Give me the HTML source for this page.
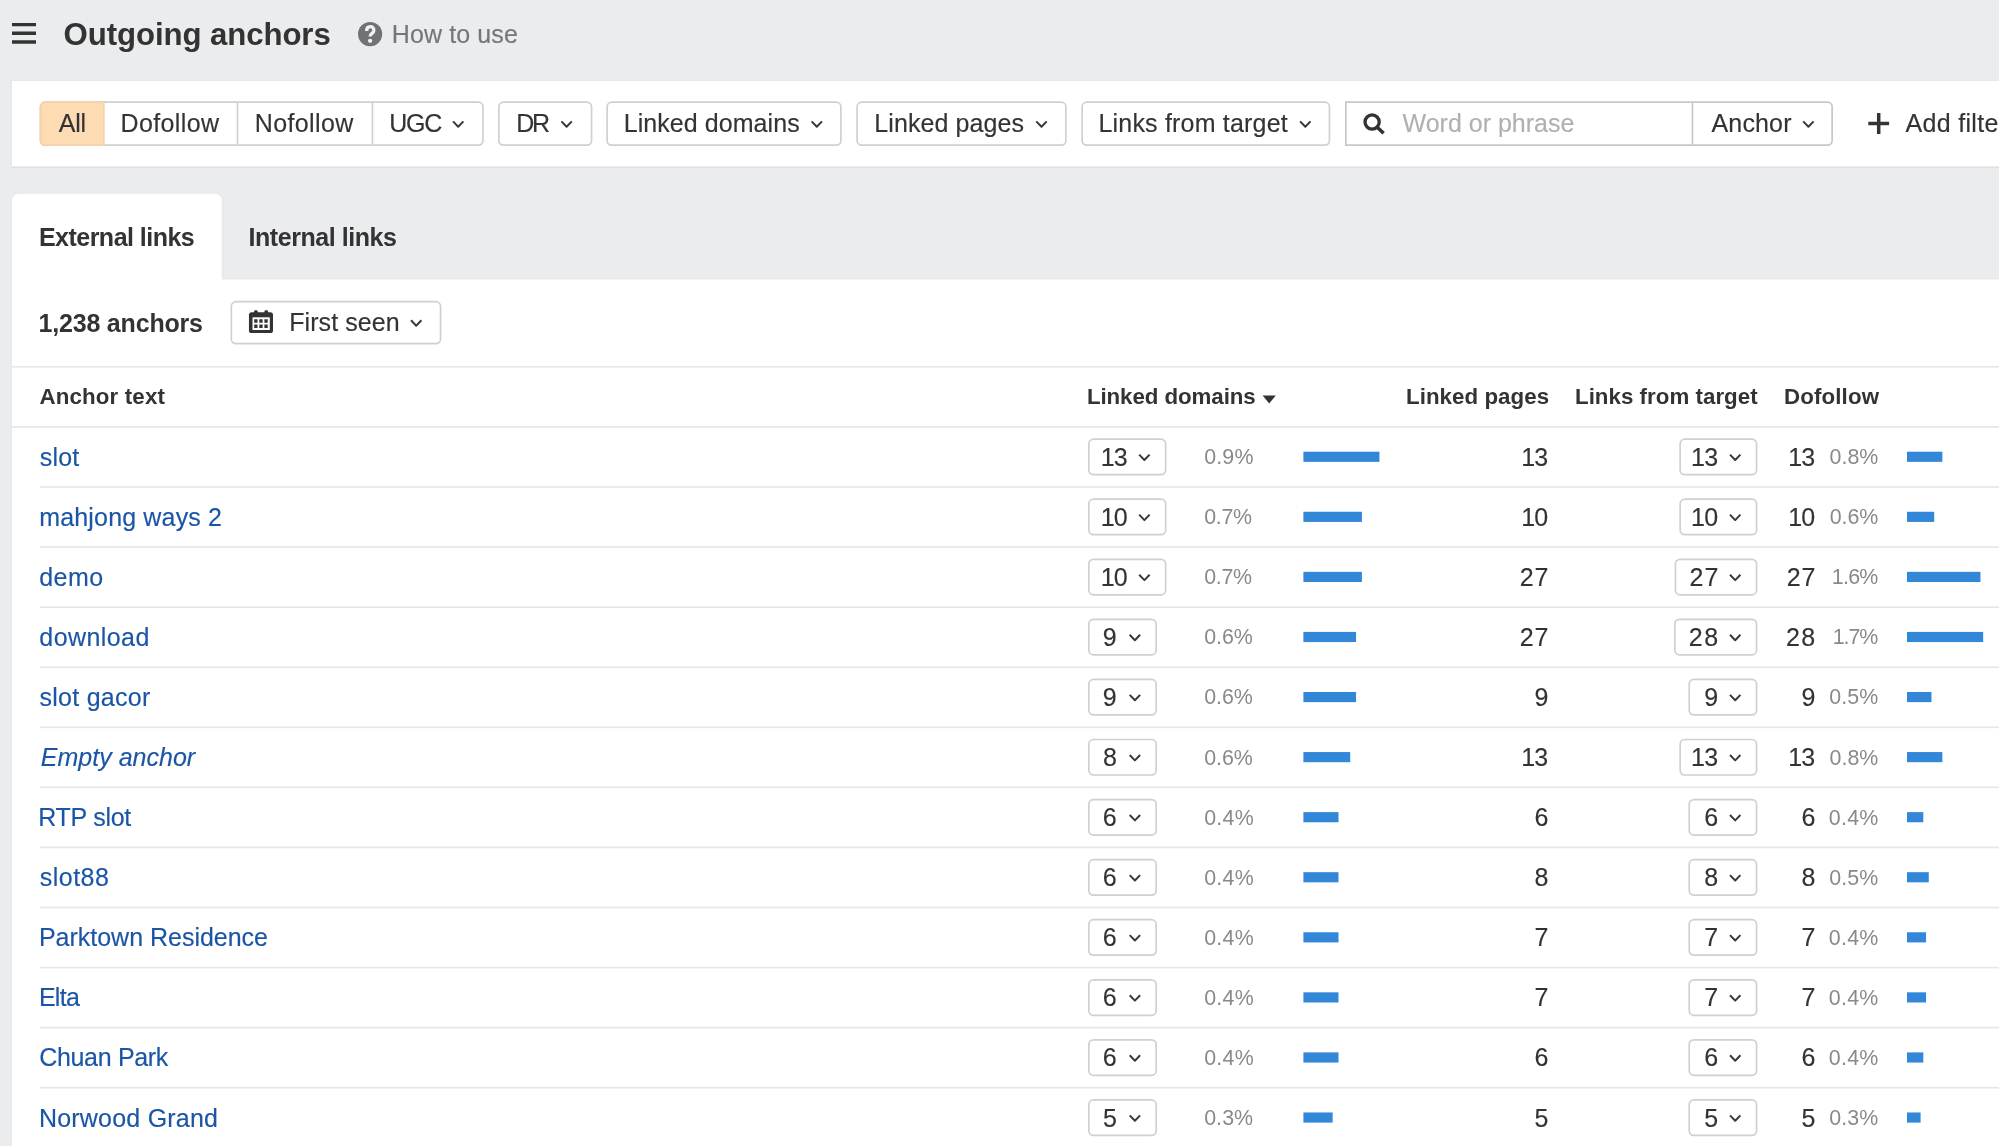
<!DOCTYPE html>
<html lang="en">
<head>
<meta charset="utf-8">
<title>Outgoing anchors</title>
<style>
*{box-sizing:border-box;margin:0;padding:0}
html,body{width:1999px;height:1146px;overflow:hidden}
body{background:#ebecee;font-family:"Liberation Sans",sans-serif;color:#333;font-size:25.0px;position:relative}
#shapes{position:absolute;left:0;top:0;display:block;filter:blur(0.4px)}
#txt{position:absolute;left:0;top:0;width:2010px;height:1160px;overflow:hidden;will-change:transform;filter:blur(0.4px)}
.t{position:absolute;white-space:pre;line-height:1;color:#333;font-size:25.0px;-webkit-text-stroke:0.15px}
.b,.p{-webkit-text-stroke:0}
.b{font-weight:700}
.g{color:#757679}
.ph{color:#b0b0b0}
.a{color:#1b55a6}
.p{color:#898989}
.i{font-style:italic}
</style>
</head>
<body>
<svg id="shapes" width="2010" height="1160" viewBox="0 0 2010 1160">
<rect x="12" y="81" width="2000" height="85.5" fill="#fff" stroke="#e8e9ec" stroke-width="3.4"/>
<rect x="12.00" y="166.00" width="1998.00" height="2.20" fill="#dfe0e3"/>
<rect x="12.00" y="81.00" width="1998.00" height="85.40" fill="#fff"/>
<path d="M12 1200V200.25a6.5 6.5 0 0 1 6.5-6.5h196.7a6.5 6.5 0 0 1 6.5 6.5V279.6H2010V1200z" fill="#fff" stroke="#e8e9ec" stroke-width="3.4"/>
<path d="M12 1200V200.25a6.5 6.5 0 0 1 6.5-6.5h196.7a6.5 6.5 0 0 1 6.5 6.5V279.6H2010V1200z" fill="#fff"/>
<path d="M12 24.6h24M12 33.3h24M12 42h24" stroke="#333" stroke-width="3.4" fill="none"/>
<circle cx="370.1" cy="34.1" r="12.1" fill="#717275"/>
<path d="M366.6 30.9C366.6 25.3 373.9 25.3 373.9 30.2C373.9 33.5 370.1 33.2 370.1 36.6" fill="none" stroke="#f3f3f4" stroke-width="3.3"/>
<circle cx="370.1" cy="40.8" r="2.15" fill="#f3f3f4"/>
<rect x="40.45" y="102.15" width="442.50" height="43.00" rx="4.65" fill="#fff" stroke="#d0d0d0" stroke-width="1.7"/>
<path d="M103.8 102.15H45.1a4.65 4.65 0 0 0-4.65 4.65V140.50a4.65 4.65 0 0 0 4.65 4.65H103.8z" fill="#fddcb4" stroke="#f3d2a7" stroke-width="1.7"/>
<rect x="236.70" y="103.00" width="1.70" height="41.30" fill="#d0d0d0"/>
<rect x="371.60" y="103.00" width="1.70" height="41.30" fill="#d0d0d0"/>
<path d="M453.00 121.40L458.20 126.80L463.40 121.40" fill="none" stroke="#3a3a3a" stroke-width="2.0" stroke-linejoin="round"/>
<rect x="498.85" y="102.15" width="92.70" height="43.00" rx="4.65" fill="#fff" stroke="#d0d0d0" stroke-width="1.7"/>
<path d="M561.40 121.40L566.60 126.80L571.80 121.40" fill="none" stroke="#3a3a3a" stroke-width="2.0" stroke-linejoin="round"/>
<rect x="607.10" y="102.15" width="233.80" height="43.00" rx="4.65" fill="#fff" stroke="#d0d0d0" stroke-width="1.7"/>
<path d="M811.60 121.40L816.80 126.80L822.00 121.40" fill="none" stroke="#3a3a3a" stroke-width="2.0" stroke-linejoin="round"/>
<rect x="857.10" y="102.15" width="208.80" height="43.00" rx="4.65" fill="#fff" stroke="#d0d0d0" stroke-width="1.7"/>
<path d="M1036.30 121.40L1041.50 126.80L1046.70 121.40" fill="none" stroke="#3a3a3a" stroke-width="2.0" stroke-linejoin="round"/>
<rect x="1082.10" y="102.15" width="247.35" height="43.00" rx="4.65" fill="#fff" stroke="#d0d0d0" stroke-width="1.7"/>
<path d="M1300.10 121.40L1305.30 126.80L1310.50 121.40" fill="none" stroke="#3a3a3a" stroke-width="2.0" stroke-linejoin="round"/>
<path d="M1345.85 102.15H1827.50a4.65 4.65 0 0 1 4.65 4.65V140.50a4.65 4.65 0 0 1-4.65 4.65H1345.85z" fill="#fff" stroke="#c8c8c8" stroke-width="1.7"/>
<rect x="1691.60" y="103.00" width="1.70" height="41.30" fill="#c8c8c8"/>
<circle cx="1372.1" cy="122" r="7.1" fill="none" stroke="#333" stroke-width="3.3"/>
<path d="M1377.2 127.2L1383.6 133.3" stroke="#333" stroke-width="3.6"/>
<path d="M1803.20 121.40L1808.40 126.80L1813.60 121.40" fill="none" stroke="#3a3a3a" stroke-width="2.0" stroke-linejoin="round"/>
<path d="M1878.7 113v20.9M1868.3 123.5h20.8" stroke="#333" stroke-width="3.5" fill="none"/>
<rect x="231.35" y="301.65" width="209.20" height="42.00" rx="4.65" fill="#fff" stroke="#d0d0d0" stroke-width="1.7"/>
<rect x="248.95" y="312.2" width="24.05" height="20.8" rx="2.6" fill="#333"/><rect x="254.1" y="310.3" width="3.6" height="4.5" rx="1.3" fill="#333"/><rect x="264.45" y="310.3" width="3.6" height="4.5" rx="1.3" fill="#333"/><rect x="252.5" y="317.3" width="17.3" height="12.7" fill="#fff"/><path d="M254.2 319.2h3.3v3.5h-3.3zM259.3 319.2h3.3v3.5h-3.3zM264.4 319.2h3.3v3.5h-3.3zM254.2 324.5h3.3v3.5h-3.3zM259.3 324.5h3.3v3.5h-3.3zM264.4 324.5h3.3v3.5h-3.3z" fill="#333"/>
<path d="M411.00 320.30L416.20 325.70L421.40 320.30" fill="none" stroke="#3a3a3a" stroke-width="2.0" stroke-linejoin="round"/>
<rect x="12.00" y="365.90" width="1987.00" height="1.70" fill="#e7e7e7"/>
<path d="M1262.6 395.4h13.2l-6.6 8z" fill="#333"/>
<rect x="12.00" y="426.10" width="1987.00" height="1.70" fill="#e7e7e7"/>
<rect x="1088.85" y="439.15" width="76.80" height="35.50" rx="4.65" fill="#fff" stroke="#d0d0d0" stroke-width="1.7"/>
<path d="M1139.20 454.60L1144.40 460.00L1149.60 454.60" fill="none" stroke="#3a3a3a" stroke-width="2.0" stroke-linejoin="round"/>
<rect x="1303.40" y="451.70" width="76.05" height="10.15" fill="#3387d8"/>
<rect x="1680.15" y="439.15" width="76.40" height="35.50" rx="4.65" fill="#fff" stroke="#d0d0d0" stroke-width="1.7"/>
<path d="M1730.00 454.60L1735.20 460.00L1740.40 454.60" fill="none" stroke="#3a3a3a" stroke-width="2.0" stroke-linejoin="round"/>
<rect x="1907.00" y="451.70" width="35.36" height="10.15" fill="#3387d8"/>
<rect x="40.00" y="486.17" width="1959.00" height="1.70" fill="#e7e7e7"/>
<rect x="1088.85" y="499.22" width="76.80" height="35.50" rx="4.65" fill="#fff" stroke="#d0d0d0" stroke-width="1.7"/>
<path d="M1139.20 514.67L1144.40 520.07L1149.60 514.67" fill="none" stroke="#3a3a3a" stroke-width="2.0" stroke-linejoin="round"/>
<rect x="1303.40" y="511.77" width="58.50" height="10.15" fill="#3387d8"/>
<rect x="1680.15" y="499.22" width="76.40" height="35.50" rx="4.65" fill="#fff" stroke="#d0d0d0" stroke-width="1.7"/>
<path d="M1730.00 514.67L1735.20 520.07L1740.40 514.67" fill="none" stroke="#3a3a3a" stroke-width="2.0" stroke-linejoin="round"/>
<rect x="1907.00" y="511.77" width="27.20" height="10.15" fill="#3387d8"/>
<rect x="40.00" y="546.24" width="1959.00" height="1.70" fill="#e7e7e7"/>
<rect x="1088.85" y="559.29" width="76.80" height="35.50" rx="4.65" fill="#fff" stroke="#d0d0d0" stroke-width="1.7"/>
<path d="M1139.20 574.74L1144.40 580.14L1149.60 574.74" fill="none" stroke="#3a3a3a" stroke-width="2.0" stroke-linejoin="round"/>
<rect x="1303.40" y="571.84" width="58.50" height="10.15" fill="#3387d8"/>
<rect x="1675.45" y="559.29" width="81.10" height="35.50" rx="4.65" fill="#fff" stroke="#d0d0d0" stroke-width="1.7"/>
<path d="M1730.00 574.74L1735.20 580.14L1740.40 574.74" fill="none" stroke="#3a3a3a" stroke-width="2.0" stroke-linejoin="round"/>
<rect x="1907.00" y="571.84" width="73.44" height="10.15" fill="#3387d8"/>
<rect x="40.00" y="606.31" width="1959.00" height="1.70" fill="#e7e7e7"/>
<rect x="1088.85" y="619.36" width="67.30" height="35.50" rx="4.65" fill="#fff" stroke="#d0d0d0" stroke-width="1.7"/>
<path d="M1129.70 634.81L1134.90 640.21L1140.10 634.81" fill="none" stroke="#3a3a3a" stroke-width="2.0" stroke-linejoin="round"/>
<rect x="1303.40" y="631.91" width="52.65" height="10.15" fill="#3387d8"/>
<rect x="1674.85" y="619.36" width="81.70" height="35.50" rx="4.65" fill="#fff" stroke="#d0d0d0" stroke-width="1.7"/>
<path d="M1730.00 634.81L1735.20 640.21L1740.40 634.81" fill="none" stroke="#3a3a3a" stroke-width="2.0" stroke-linejoin="round"/>
<rect x="1907.00" y="631.91" width="76.16" height="10.15" fill="#3387d8"/>
<rect x="40.00" y="666.38" width="1959.00" height="1.70" fill="#e7e7e7"/>
<rect x="1088.85" y="679.43" width="67.30" height="35.50" rx="4.65" fill="#fff" stroke="#d0d0d0" stroke-width="1.7"/>
<path d="M1129.70 694.88L1134.90 700.28L1140.10 694.88" fill="none" stroke="#3a3a3a" stroke-width="2.0" stroke-linejoin="round"/>
<rect x="1303.40" y="691.98" width="52.65" height="10.15" fill="#3387d8"/>
<rect x="1689.25" y="679.43" width="67.30" height="35.50" rx="4.65" fill="#fff" stroke="#d0d0d0" stroke-width="1.7"/>
<path d="M1730.00 694.88L1735.20 700.28L1740.40 694.88" fill="none" stroke="#3a3a3a" stroke-width="2.0" stroke-linejoin="round"/>
<rect x="1907.00" y="691.98" width="24.48" height="10.15" fill="#3387d8"/>
<rect x="40.00" y="726.45" width="1959.00" height="1.70" fill="#e7e7e7"/>
<rect x="1088.85" y="739.50" width="67.30" height="35.50" rx="4.65" fill="#fff" stroke="#d0d0d0" stroke-width="1.7"/>
<path d="M1129.70 754.95L1134.90 760.35L1140.10 754.95" fill="none" stroke="#3a3a3a" stroke-width="2.0" stroke-linejoin="round"/>
<rect x="1303.40" y="752.05" width="46.80" height="10.15" fill="#3387d8"/>
<rect x="1680.15" y="739.50" width="76.40" height="35.50" rx="4.65" fill="#fff" stroke="#d0d0d0" stroke-width="1.7"/>
<path d="M1730.00 754.95L1735.20 760.35L1740.40 754.95" fill="none" stroke="#3a3a3a" stroke-width="2.0" stroke-linejoin="round"/>
<rect x="1907.00" y="752.05" width="35.36" height="10.15" fill="#3387d8"/>
<rect x="40.00" y="786.52" width="1959.00" height="1.70" fill="#e7e7e7"/>
<rect x="1088.85" y="799.57" width="67.30" height="35.50" rx="4.65" fill="#fff" stroke="#d0d0d0" stroke-width="1.7"/>
<path d="M1129.70 815.02L1134.90 820.42L1140.10 815.02" fill="none" stroke="#3a3a3a" stroke-width="2.0" stroke-linejoin="round"/>
<rect x="1303.40" y="812.12" width="35.10" height="10.15" fill="#3387d8"/>
<rect x="1689.25" y="799.57" width="67.30" height="35.50" rx="4.65" fill="#fff" stroke="#d0d0d0" stroke-width="1.7"/>
<path d="M1730.00 815.02L1735.20 820.42L1740.40 815.02" fill="none" stroke="#3a3a3a" stroke-width="2.0" stroke-linejoin="round"/>
<rect x="1907.00" y="812.12" width="16.32" height="10.15" fill="#3387d8"/>
<rect x="40.00" y="846.59" width="1959.00" height="1.70" fill="#e7e7e7"/>
<rect x="1088.85" y="859.64" width="67.30" height="35.50" rx="4.65" fill="#fff" stroke="#d0d0d0" stroke-width="1.7"/>
<path d="M1129.70 875.09L1134.90 880.49L1140.10 875.09" fill="none" stroke="#3a3a3a" stroke-width="2.0" stroke-linejoin="round"/>
<rect x="1303.40" y="872.19" width="35.10" height="10.15" fill="#3387d8"/>
<rect x="1689.25" y="859.64" width="67.30" height="35.50" rx="4.65" fill="#fff" stroke="#d0d0d0" stroke-width="1.7"/>
<path d="M1730.00 875.09L1735.20 880.49L1740.40 875.09" fill="none" stroke="#3a3a3a" stroke-width="2.0" stroke-linejoin="round"/>
<rect x="1907.00" y="872.19" width="21.76" height="10.15" fill="#3387d8"/>
<rect x="40.00" y="906.66" width="1959.00" height="1.70" fill="#e7e7e7"/>
<rect x="1088.85" y="919.71" width="67.30" height="35.50" rx="4.65" fill="#fff" stroke="#d0d0d0" stroke-width="1.7"/>
<path d="M1129.70 935.16L1134.90 940.56L1140.10 935.16" fill="none" stroke="#3a3a3a" stroke-width="2.0" stroke-linejoin="round"/>
<rect x="1303.40" y="932.26" width="35.10" height="10.15" fill="#3387d8"/>
<rect x="1689.25" y="919.71" width="67.30" height="35.50" rx="4.65" fill="#fff" stroke="#d0d0d0" stroke-width="1.7"/>
<path d="M1730.00 935.16L1735.20 940.56L1740.40 935.16" fill="none" stroke="#3a3a3a" stroke-width="2.0" stroke-linejoin="round"/>
<rect x="1907.00" y="932.26" width="19.04" height="10.15" fill="#3387d8"/>
<rect x="40.00" y="966.73" width="1959.00" height="1.70" fill="#e7e7e7"/>
<rect x="1088.85" y="979.78" width="67.30" height="35.50" rx="4.65" fill="#fff" stroke="#d0d0d0" stroke-width="1.7"/>
<path d="M1129.70 995.23L1134.90 1000.63L1140.10 995.23" fill="none" stroke="#3a3a3a" stroke-width="2.0" stroke-linejoin="round"/>
<rect x="1303.40" y="992.33" width="35.10" height="10.15" fill="#3387d8"/>
<rect x="1689.25" y="979.78" width="67.30" height="35.50" rx="4.65" fill="#fff" stroke="#d0d0d0" stroke-width="1.7"/>
<path d="M1730.00 995.23L1735.20 1000.63L1740.40 995.23" fill="none" stroke="#3a3a3a" stroke-width="2.0" stroke-linejoin="round"/>
<rect x="1907.00" y="992.33" width="19.04" height="10.15" fill="#3387d8"/>
<rect x="40.00" y="1026.80" width="1959.00" height="1.70" fill="#e7e7e7"/>
<rect x="1088.85" y="1039.85" width="67.30" height="35.50" rx="4.65" fill="#fff" stroke="#d0d0d0" stroke-width="1.7"/>
<path d="M1129.70 1055.30L1134.90 1060.70L1140.10 1055.30" fill="none" stroke="#3a3a3a" stroke-width="2.0" stroke-linejoin="round"/>
<rect x="1303.40" y="1052.40" width="35.10" height="10.15" fill="#3387d8"/>
<rect x="1689.25" y="1039.85" width="67.30" height="35.50" rx="4.65" fill="#fff" stroke="#d0d0d0" stroke-width="1.7"/>
<path d="M1730.00 1055.30L1735.20 1060.70L1740.40 1055.30" fill="none" stroke="#3a3a3a" stroke-width="2.0" stroke-linejoin="round"/>
<rect x="1907.00" y="1052.40" width="16.32" height="10.15" fill="#3387d8"/>
<rect x="40.00" y="1086.87" width="1959.00" height="1.70" fill="#e7e7e7"/>
<rect x="1088.85" y="1099.92" width="67.30" height="35.50" rx="4.65" fill="#fff" stroke="#d0d0d0" stroke-width="1.7"/>
<path d="M1129.70 1115.37L1134.90 1120.77L1140.10 1115.37" fill="none" stroke="#3a3a3a" stroke-width="2.0" stroke-linejoin="round"/>
<rect x="1303.40" y="1112.47" width="29.25" height="10.15" fill="#3387d8"/>
<rect x="1689.25" y="1099.92" width="67.30" height="35.50" rx="4.65" fill="#fff" stroke="#d0d0d0" stroke-width="1.7"/>
<path d="M1730.00 1115.37L1735.20 1120.77L1740.40 1115.37" fill="none" stroke="#3a3a3a" stroke-width="2.0" stroke-linejoin="round"/>
<rect x="1907.00" y="1112.47" width="13.60" height="10.15" fill="#3387d8"/>
</svg>
<div id="txt">
<div class="t b" style="left:63.55px;top:19px;font-size:31.2px;letter-spacing:-0.09px;">Outgoing anchors</div>
<div class="t g" style="left:391.75px;top:22px;letter-spacing:0.12px;">How to use</div>
<div class="t" style="left:58.80px;top:111px;letter-spacing:-0.27px;">All</div>
<div class="t" style="left:120.50px;top:111px;letter-spacing:0.39px;">Dofollow</div>
<div class="t" style="left:254.75px;top:111px;letter-spacing:0.39px;">Nofollow</div>
<div class="t" style="left:389.25px;top:111px;letter-spacing:-1.25px;">UGC</div>
<div class="t" style="left:516.30px;top:111px;letter-spacing:-2.35px;">DR</div>
<div class="t" style="left:623.75px;top:111px;letter-spacing:0.06px;">Linked domains</div>
<div class="t" style="left:874.25px;top:111px;letter-spacing:0.09px;">Linked pages</div>
<div class="t" style="left:1098.50px;top:111px;letter-spacing:0.19px;">Links from target</div>
<div class="t ph" style="left:1402.55px;top:111px;">Word or phrase</div>
<div class="t" style="left:1711.50px;top:111px;letter-spacing:0.15px;">Anchor</div>
<div class="t" style="left:1905.50px;top:111px;letter-spacing:0.31px;">Add filter</div>
<div class="t b" style="left:38.95px;top:225px;letter-spacing:-0.52px;">External links</div>
<div class="t b" style="left:248.55px;top:225px;letter-spacing:-0.45px;">Internal links</div>
<div class="t b" style="left:38.50px;top:311px;letter-spacing:-0.19px;">1,238 anchors</div>
<div class="t" style="left:289.25px;top:310px;letter-spacing:0.06px;">First seen</div>
<div class="t b" style="left:39.50px;top:386px;font-size:22.3px;letter-spacing:0.15px;">Anchor text</div>
<div class="t b" style="left:1086.90px;top:386px;font-size:22.3px;letter-spacing:-0.07px;">Linked domains</div>
<div class="t b" style="left:1406.00px;top:386px;font-size:22.3px;letter-spacing:0.05px;">Linked pages</div>
<div class="t b" style="left:1575.00px;top:386px;font-size:22.3px;letter-spacing:0.03px;">Links from target</div>
<div class="t b" style="left:1784.10px;top:386px;font-size:22.3px;letter-spacing:0.11px;">Dofollow</div>
<div class="t a" style="left:39.75px;top:445px;letter-spacing:0.17px;">slot</div>
<div class="t" style="left:1100.70px;top:445px;letter-spacing:-0.75px;">13</div>
<div class="t p" style="left:1204.15px;top:447px;font-size:21.4px;letter-spacing:0.18px;">0.9%</div>
<div class="t" style="left:1521.20px;top:445px;letter-spacing:-0.75px;">13</div>
<div class="t" style="left:1691.00px;top:445px;letter-spacing:-0.75px;">13</div>
<div class="t" style="left:1788.20px;top:445px;letter-spacing:-0.75px;">13</div>
<div class="t p" style="left:1829.55px;top:447px;font-size:21.4px;letter-spacing:0.02px;">0.8%</div>
<div class="t a" style="left:39.25px;top:505px;letter-spacing:0.16px;">mahjong ways 2</div>
<div class="t" style="left:1100.70px;top:505px;letter-spacing:-0.75px;">10</div>
<div class="t p" style="left:1204.15px;top:507px;font-size:21.4px;letter-spacing:-0.28px;">0.7%</div>
<div class="t" style="left:1521.20px;top:505px;letter-spacing:-0.75px;">10</div>
<div class="t" style="left:1691.00px;top:505px;letter-spacing:-0.75px;">10</div>
<div class="t" style="left:1788.20px;top:505px;letter-spacing:-0.75px;">10</div>
<div class="t p" style="left:1829.65px;top:507px;font-size:21.4px;letter-spacing:-0.02px;">0.6%</div>
<div class="t a" style="left:39.30px;top:565px;letter-spacing:0.40px;">demo</div>
<div class="t" style="left:1100.70px;top:565px;letter-spacing:-0.75px;">10</div>
<div class="t p" style="left:1204.15px;top:567px;font-size:21.4px;letter-spacing:-0.28px;">0.7%</div>
<div class="t" style="left:1519.75px;top:565px;letter-spacing:0.95px;">27</div>
<div class="t" style="left:1689.55px;top:565px;letter-spacing:0.95px;">27</div>
<div class="t" style="left:1786.75px;top:565px;letter-spacing:0.95px;">27</div>
<div class="t p" style="left:1831.85px;top:567px;font-size:21.4px;letter-spacing:-0.75px;">1.6%</div>
<div class="t a" style="left:39.30px;top:625px;letter-spacing:0.43px;">download</div>
<div class="t" style="left:1102.75px;top:625px;">9</div>
<div class="t p" style="left:1204.15px;top:627px;font-size:21.4px;letter-spacing:-0.02px;">0.6%</div>
<div class="t" style="left:1519.75px;top:625px;letter-spacing:0.95px;">27</div>
<div class="t" style="left:1688.75px;top:625px;letter-spacing:1.50px;">28</div>
<div class="t" style="left:1785.95px;top:625px;letter-spacing:1.50px;">28</div>
<div class="t p" style="left:1832.65px;top:627px;font-size:21.4px;letter-spacing:-1.02px;">1.7%</div>
<div class="t a" style="left:39.55px;top:685px;letter-spacing:0.26px;">slot gacor</div>
<div class="t" style="left:1102.75px;top:685px;">9</div>
<div class="t p" style="left:1204.15px;top:687px;font-size:21.4px;letter-spacing:-0.02px;">0.6%</div>
<div class="t" style="left:1534.45px;top:685px;">9</div>
<div class="t" style="left:1704.25px;top:685px;">9</div>
<div class="t" style="left:1801.45px;top:685px;">9</div>
<div class="t p" style="left:1829.25px;top:687px;font-size:21.4px;letter-spacing:0.12px;">0.5%</div>
<div class="t a i" style="left:40.85px;top:745px;letter-spacing:0.01px;">Empty anchor</div>
<div class="t" style="left:1103.00px;top:745px;">8</div>
<div class="t p" style="left:1204.15px;top:748px;font-size:21.4px;letter-spacing:-0.02px;">0.6%</div>
<div class="t" style="left:1521.20px;top:745px;letter-spacing:-0.75px;">13</div>
<div class="t" style="left:1691.00px;top:745px;letter-spacing:-0.75px;">13</div>
<div class="t" style="left:1788.20px;top:745px;letter-spacing:-0.75px;">13</div>
<div class="t p" style="left:1829.55px;top:748px;font-size:21.4px;letter-spacing:0.02px;">0.8%</div>
<div class="t a" style="left:38.30px;top:805px;letter-spacing:-0.29px;">RTP slot</div>
<div class="t" style="left:1102.75px;top:805px;">6</div>
<div class="t p" style="left:1204.15px;top:808px;font-size:21.4px;letter-spacing:0.25px;">0.4%</div>
<div class="t" style="left:1534.45px;top:805px;">6</div>
<div class="t" style="left:1704.25px;top:805px;">6</div>
<div class="t" style="left:1801.45px;top:805px;">6</div>
<div class="t p" style="left:1828.85px;top:808px;font-size:21.4px;letter-spacing:0.25px;">0.4%</div>
<div class="t a" style="left:39.65px;top:865px;letter-spacing:0.51px;">slot88</div>
<div class="t" style="left:1102.75px;top:865px;">6</div>
<div class="t p" style="left:1204.15px;top:868px;font-size:21.4px;letter-spacing:0.25px;">0.4%</div>
<div class="t" style="left:1534.45px;top:865px;">8</div>
<div class="t" style="left:1704.25px;top:865px;">8</div>
<div class="t" style="left:1801.45px;top:865px;">8</div>
<div class="t p" style="left:1829.25px;top:868px;font-size:21.4px;letter-spacing:0.12px;">0.5%</div>
<div class="t a" style="left:38.90px;top:925px;letter-spacing:-0.01px;">Parktown Residence</div>
<div class="t" style="left:1102.75px;top:925px;">6</div>
<div class="t p" style="left:1204.15px;top:928px;font-size:21.4px;letter-spacing:0.25px;">0.4%</div>
<div class="t" style="left:1534.45px;top:925px;">7</div>
<div class="t" style="left:1704.25px;top:925px;">7</div>
<div class="t" style="left:1801.45px;top:925px;">7</div>
<div class="t p" style="left:1828.85px;top:928px;font-size:21.4px;letter-spacing:0.25px;">0.4%</div>
<div class="t a" style="left:38.90px;top:985px;letter-spacing:-0.73px;">Elta</div>
<div class="t" style="left:1102.75px;top:985px;">6</div>
<div class="t p" style="left:1204.15px;top:988px;font-size:21.4px;letter-spacing:0.25px;">0.4%</div>
<div class="t" style="left:1534.45px;top:985px;">7</div>
<div class="t" style="left:1704.25px;top:985px;">7</div>
<div class="t" style="left:1801.45px;top:985px;">7</div>
<div class="t p" style="left:1828.85px;top:988px;font-size:21.4px;letter-spacing:0.25px;">0.4%</div>
<div class="t a" style="left:39.15px;top:1045px;letter-spacing:-0.31px;">Chuan Park</div>
<div class="t" style="left:1102.75px;top:1045px;">6</div>
<div class="t p" style="left:1204.15px;top:1048px;font-size:21.4px;letter-spacing:0.25px;">0.4%</div>
<div class="t" style="left:1534.45px;top:1045px;">6</div>
<div class="t" style="left:1704.25px;top:1045px;">6</div>
<div class="t" style="left:1801.45px;top:1045px;">6</div>
<div class="t p" style="left:1828.85px;top:1048px;font-size:21.4px;letter-spacing:0.25px;">0.4%</div>
<div class="t a" style="left:38.90px;top:1106px;letter-spacing:0.22px;">Norwood Grand</div>
<div class="t" style="left:1103.00px;top:1106px;">5</div>
<div class="t p" style="left:1204.15px;top:1108px;font-size:21.4px;letter-spacing:0.08px;">0.3%</div>
<div class="t" style="left:1534.45px;top:1106px;">5</div>
<div class="t" style="left:1704.25px;top:1106px;">5</div>
<div class="t" style="left:1801.45px;top:1106px;">5</div>
<div class="t p" style="left:1829.35px;top:1108px;font-size:21.4px;letter-spacing:0.08px;">0.3%</div>
</div>
</body>
</html>
